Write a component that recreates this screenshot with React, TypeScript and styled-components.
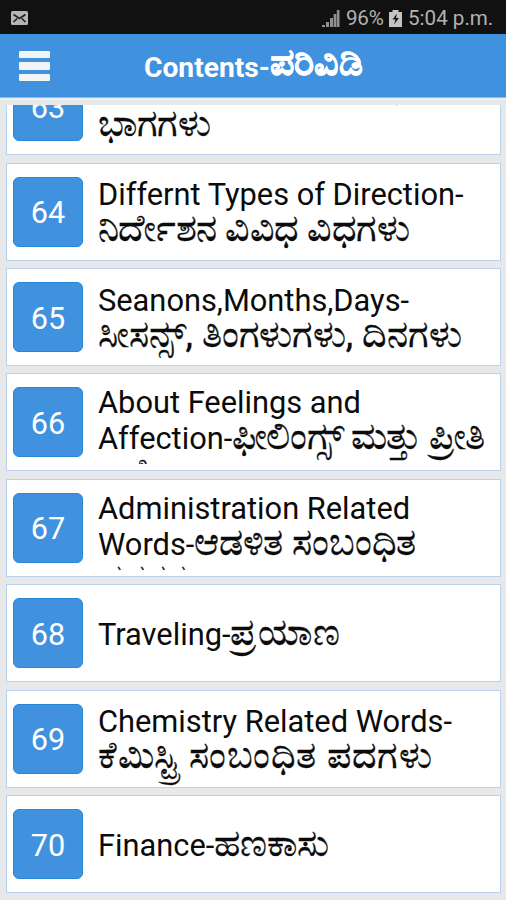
import React from "react";
import styled, { createGlobalStyle } from "styled-components";

const GlobalStyle = createGlobalStyle`
  * { box-sizing: border-box; }
  body { margin: 0; background: #e7e8e9; }
`;

const Screen = styled.main`
  display: flex;
  flex-direction: column;
  width: 506px;
  height: 900px;
  overflow: hidden;
  background: #e7e8e9;
  font-family: Roboto, "Noto Sans", sans-serif;
`;

const StatusBar = styled.div`
  flex: none;
  display: flex;
  align-items: center;
  height: 34px;
  padding: 2px 12px 0 10px;
  background: #111;
  color: #b2b2b2;
  font-size: 20.6px;
  line-height: 32px;
`;

const StatusGroup = styled.div`
  display: flex;
  align-items: center;
  margin-left: auto;
`;

const Percent = styled.span`
  width: 39px;
  margin: 0 4px 0 6px;
  white-space: nowrap;
  letter-spacing: -0.2px;
`;

const Clock = styled.span`
  width: 86px;
  margin-left: 6px;
  white-space: nowrap;
`;

const Header = styled.header`
  flex: none;
  display: flex;
  align-items: center;
  height: 64px;
  padding-left: 18.5px;
  background: #4192de;
  border-bottom: 1px solid #8dbbe6;
`;

const MenuButton = styled.button`
  display: flex;
  flex-direction: column;
  gap: 4px;
  width: 31px;
  padding: 0;
  margin-top: 1px;
  border: 0;
  background: none;
`;

const MenuBar = styled.span`
  height: 7.5px;
  border-radius: 1px;
  background: #f2f4f6;
`;

const Title = styled.h1`
  margin: 4px 0 0 94.5px;
  color: #fff;
  font-size: 28.2px;
  font-weight: 700;
  line-height: 36px;
  white-space: nowrap;
`;

const Kannada = styled.span<{ $spacing?: number; $raise?: number }>`
  font-size: 37.8px;
  line-height: 0;
  vertical-align: ${(p) => p.$raise ?? 0.5}px;
  letter-spacing: ${(p) => p.$spacing ?? 0}px;
  -webkit-text-stroke: 0.3px currentColor;
`;

const ListFrame = styled.section`
  flex: 1;
  min-height: 0;
  padding: 4.5px 5px 0 6px;
  border-top: 2px solid #e9edf5;
`;

const List = styled.div`
  display: flex;
  flex-direction: column;
  justify-content: flex-end;
  gap: 7.4px;
  height: 788.5px;
  overflow: hidden;
`;

const Row = styled.article`
  flex: none;
  display: flex;
  align-items: center;
  height: 98px;
  padding: 0 6px;
  border: 1px solid #b9d1ec;
  background: #fff;
`;

const Badge = styled.div`
  flex: none;
  display: flex;
  align-items: center;
  justify-content: center;
  width: 70px;
  height: 70px;
  padding-top: 2px;
  border: 1px solid #2787d8;
  border-radius: 6px;
  background: #4192de;
  color: #fff;
  font-size: 30.6px;
`;

const Label = styled.div<{ $clipped: boolean }>`
  flex: 1;
  height: ${(p) => (p.$clipped ? "84px" : "auto")};
  padding-top: ${(p) => (p.$clipped ? 5 : 3)}px;
  margin-left: 15px;
  overflow: ${(p) => (p.$clipped ? "hidden" : "visible")};
  color: #0b0b0b;
`;

const Line = styled.div<{ $indent?: number }>`
  height: 36px;
  padding-left: ${(p) => p.$indent ?? 0}px;
  font-size: 30.8px;
  line-height: 36px;
  white-space: nowrap;
`;

type TextLine = { en?: string; kn?: string; indent?: number; spacing?: number };

const topics: { number: number; lines: TextLine[] }[] = [
  { number: 63, lines: [{ kn: ",", indent: 296 }, { kn: "ಭಾಗಗಳು", spacing: -0.3 }] },
  { number: 64, lines: [{ en: "Differnt Types of Direction-" }, { kn: "ನಿರ್ದೇಶನ ವಿವಿಧ ವಿಧಗಳು", spacing: -0.6 }] },
  { number: 65, lines: [{ en: "Seanons,Months,Days-" }, { kn: "ಸೀಸನ್ಸ್, ತಿಂಗಳುಗಳು, ದಿನಗಳು", spacing: -0.2 }] },
  { number: 66, lines: [{ en: "About Feelings and" }, { en: "Affection-", kn: "ಫೀಲಿಂಗ್ಸ್ ಮತ್ತು ಪ್ರೀತಿ", spacing: -0.85 }, { kn: "ಬಗ್ಗೆ" }] },
  { number: 67, lines: [{ en: "Administration Related" }, { en: "Words-", kn: "ಆಡಳಿತ ಸಂಬಂಧಿತ", spacing: -0.3 }, { kn: "ಪದಗಳು", spacing: -0.6 }] },
  { number: 68, lines: [{ en: "Traveling-", kn: "ಪ್ರಯಾಣ", spacing: 1.5 }] },
  { number: 69, lines: [{ en: "Chemistry Related Words-" }, { kn: "ಕೆಮಿಸ್ಟ್ರಿ ಸಂಬಂಧಿತ ಪದಗಳು", spacing: 0.7 }] },
  { number: 70, lines: [{ en: "Finance-", kn: "ಹಣಕಾಸು" }] },
];

const MailIcon = () => (
  <svg width="19" height="16" viewBox="0 0 19 16">
    <rect x="1" y="1" width="17" height="14" rx="1.5" fill="#b5b5b5" />
    <path d="M3.5 4.5 9.5 8.5l6-4M3.5 12l3.7-3.5M15.5 12l-3.7-3.5" fill="none" stroke="#222" strokeWidth="1.7" />
  </svg>
);

const SignalIcon = () => (
  <svg width="19" height="19" viewBox="0 0 19 19" fill="#8f8f8f">
    <path d="M1 16h3v2H1zM5 13h3v5H5zM9 9h3v9H9zM12.6 5h2.7v13h-2.7zM15.8 1h2.7v17h-2.7z" />
  </svg>
);

const BatteryIcon = () => (
  <svg width="13" height="19" viewBox="0 0 13 19">
    <path d="M3.5 1h6v2H13v15H0V3h3.5z" fill="#c4c4c4" />
    <path d="M8 4.5 3.5 10.5h3L5 15.5l5-6.5H7z" fill="#161616" />
  </svg>
);

export default function App() {
  return (
    <Screen>
      <GlobalStyle />
      <StatusBar>
        <MailIcon />
        <StatusGroup>
          <SignalIcon />
          <Percent>96%</Percent>
          <BatteryIcon />
          <Clock>5:04 p.m.</Clock>
        </StatusGroup>
      </StatusBar>
      <Header>
        <MenuButton aria-label="Menu">
          <MenuBar />
          <MenuBar />
          <MenuBar />
        </MenuButton>
        <Title>
          Contents-<Kannada $raise={2}>ಪರಿವಿಡಿ</Kannada>
        </Title>
      </Header>
      <ListFrame>
        <List>
          {topics.map((topic) => (
            <Row key={topic.number}>
              <Badge>{topic.number}</Badge>
              <Label $clipped={topic.lines.length > 2}>
                {topic.lines.map((line, i) => (
                  <Line key={i} $indent={line.indent}>
                    {line.en}
                    {line.kn && <Kannada $spacing={line.spacing}>{line.kn}</Kannada>}
                  </Line>
                ))}
              </Label>
            </Row>
          ))}
        </List>
      </ListFrame>
    </Screen>
  );
}
